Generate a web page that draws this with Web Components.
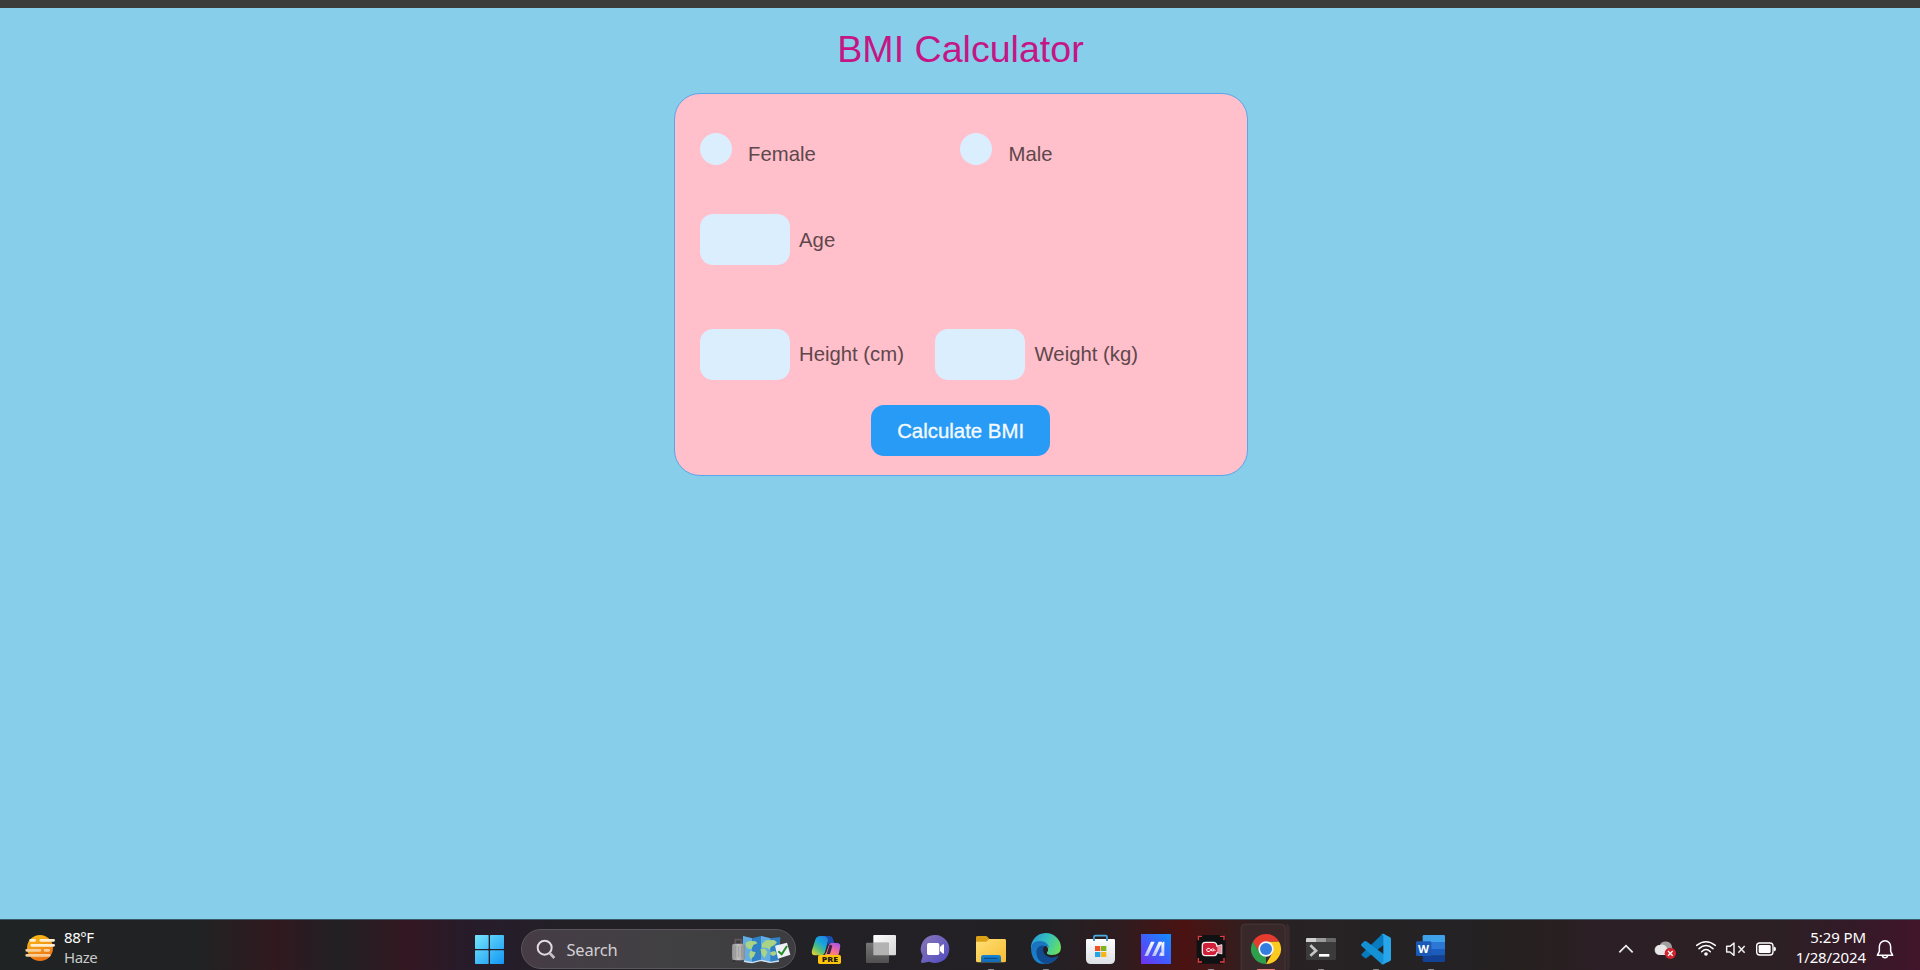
<!DOCTYPE html>
<html lang="en">
<head>
<meta charset="utf-8">
<title>BMI Calculator</title>
<style>
html,body{margin:0;height:100%;overflow:hidden;background:#87ceeb;font-family:"Liberation Sans",Arial,sans-serif}
</style>
</head>
<body>
<desktop-screen></desktop-screen>
<script>
const define = (name, html, setup) => customElements.define(name, class extends HTMLElement {
  connectedCallback() {
    if (this.shadowRoot) return;
    this.attachShadow({ mode: 'open' }).innerHTML = html;
    if (setup) setup(this, this.shadowRoot);
  }
});

/* Each icon: [viewBox x, width, drawing]; three drawing units per pixel, y runs from 27 to 180. */
const run = (x, c = '#8f8b8d', w = 20) => `<rect x="${x - w / 2}" y="177" width="${w}" height="9" rx="4" fill="${c}"/>`;
const icons = {
  haze: [60, 120, `<defs><linearGradient id="g" x1="0" y1="0" x2="0.4" y2="1"><stop stop-color="#fdc215"/><stop offset="1" stop-color="#ec7417"/></linearGradient></defs>
    <circle cx="120" cy="114" r="39" fill="url(#g)"/>
    <g stroke-linecap="round" stroke-width="8" fill="none"><path d="M92 91h12M122 91h39M95 106h66" stroke="#ffefd0"/><path d="M80 121h40M135 121h11M80 136h68" stroke="#f8cf9b"/></g>`],
  start: [3, 180, `<defs><linearGradient id="g" gradientUnits="userSpaceOnUse" x1="45" y1="75" x2="132" y2="162"><stop stop-color="#76e5fb"/><stop offset="1" stop-color="#1296f4"/></linearGradient></defs>
    <g fill="url(#g)"><rect x="45" y="75" width="41" height="42" rx="2"/><rect x="90" y="75" width="42" height="42" rx="2"/><rect x="45" y="121" width="41" height="41" rx="2"/><rect x="90" y="121" width="42" height="41" rx="2"/></g>`],
  glass: [220, 75, `<g fill="none" stroke="#dedce0" stroke-width="6"><circle cx="252" cy="113" r="21"/><path d="M267 129l14 15" stroke="#c5bfc6" stroke-width="8"/></g>`],
  travel: [258, 204, `<defs><linearGradient id="g"><stop stop-color="#8d8e90"/><stop offset=".5" stop-color="#c2c1bf"/><stop offset="1" stop-color="#8b8b8c"/></linearGradient></defs>
    <path d="M306 78l27 7 27-7 28 7 30-4-4 73-26 4-28-6-27 7-28-4z" fill="#2f80c4"/><path d="M306 78l27 7v74l-28-4zM360 78l28 7v73l-28-6z" fill="#62aee2"/>
    <path d="M305 153l28 5 27-7 28 6 26-4" fill="none" stroke="#d3e1ec" stroke-width="4"/>
    <path d="M314 98l10-5 20 1 5 6-12 5-5 11-9 2-9-9zM328 122l16 5-5 12-10 9-5-14zM363 101l12-10 24-1 9 7-8 9-10 4-5 9-8-6-14 0zM358 118l15-2 6 11-8 17-8-10zM388 126l14-3 5 9-9 6-10-4z" fill="#a9d483"/>
    <path d="M283 101V89h18v12" fill="none" stroke="#63575b" stroke-width="5"/><rect x="273" y="101" width="39" height="50" rx="7" fill="url(#g)"/><path d="M284 108v34M293 108v34M302 108v34" stroke="#939495" stroke-width="2.5"/><path d="M280 151v4M306 151v4" stroke="#2d2d2f" stroke-width="6"/>
    <path d="M402 107l36-9 10 36-37 12z" fill="#eef2f7"/><path d="M412 124l10 9 16-25" fill="none" stroke="#228b25" stroke-width="6"/>`],
  copilot: [-3, 165, `<defs><linearGradient id="a" x1=".8" y1="0" x2=".1" y2="1"><stop stop-color="#2381dd"/><stop offset=".35" stop-color="#16a5df"/><stop offset=".65" stop-color="#54bd7b"/><stop offset="1" stop-color="#eed52b"/></linearGradient><linearGradient id="b" x1=".8" y1="0" x2=".2" y2="1"><stop stop-color="#a957e6"/><stop offset=".5" stop-color="#f26b9e"/><stop offset="1" stop-color="#ff9b50"/></linearGradient></defs>
    <path d="M60 78h28l-12 44q-3 14-12 14H45q-13 0-9-15l10-32q4-11 14-11z" fill="url(#a)"/><path d="M74 78h14q9 0 12 12l4 10h-13q-7 0-9 8l2-17q-2-10-10-13z" fill="#1b50b0"/>
    <path d="M95 99h15q14 0 10 15l-5 23H68q8-1 11-10l6-18q3-10 10-10z" fill="url(#b)"/><path d="M92 104h-3l-9 28h10l7-25z" fill="#3c2144"/><rect x="54" y="135" width="69" height="27" rx="5" fill="#fdc40c"/>
    <text x="65" y="157" font-family="Noto Sans,sans-serif" font-size="21" font-weight="900" fill="#231d14" textLength="49" lengthAdjust="spacingAndGlyphs">PRE</text>`],
  taskview: [162, 165, `<defs><linearGradient id="a" x1="0" y1="0" x2="1" y2="1"><stop stop-color="#fff"/><stop offset="1" stop-color="#d5d5d5"/></linearGradient><linearGradient id="b" x2="0" y2="1"><stop stop-color="#777"/><stop offset="1" stop-color="#505050"/></linearGradient></defs>
    <rect x="220" y="75" width="68" height="61" rx="3" fill="url(#a)"/><rect x="198" y="98" width="69" height="61" rx="3" fill="url(#b)"/><path d="M220 98h44q3 0 3 3v35h-47z" fill="#b3b3b3"/>`],
  chat: [327, 165, `<defs><linearGradient id="a" x1="0" y1="0" x2="1" y2="1"><stop stop-color="#8b76b6"/><stop offset=".5" stop-color="#6c62bd"/><stop offset="1" stop-color="#504ac0"/></linearGradient></defs>
    <path d="M406 75a42 42 0 1 1-18 80l-21 4q-5 0-4-5l5-16a42 42 0 0 1 38-63z" fill="url(#a)"/><rect x="381" y="99" width="37" height="36" rx="5" fill="#fff"/><path d="M420 111l9-8q3-1 3 3v22q0 4-3 3l-9-8z" fill="#fff"/>`],
  explorer: [12, 165, `<defs><linearGradient id="a" x1="0" y1="0" x2="1" y2="1"><stop stop-color="#ffdf77"/><stop offset="1" stop-color="#f7bd30"/></linearGradient><linearGradient id="b" x2="0" y2="1"><stop stop-color="#1685d5"/><stop offset="1" stop-color="#1268b4"/></linearGradient></defs>
    <path d="M48 82q0-4 5-4h24q4 0 6 3l5 6h45q5 0 5 5v13H48z" fill="#daa017"/><path d="M48 95h29q4 0 7-4l3-4h46q5 0 5 5v60q0 5-5 5H53q-5 0-5-5z" fill="url(#a)"/><path d="M63 157v-15q0-7 7-7h46q7 0 7 7v15z" fill="url(#b)"/><path d="M73 145h38" stroke="#0a518c" stroke-width="4" stroke-linecap="round"/>${run(93)}`],
  edge: [177, 165, `<defs><linearGradient id="a" x1="0" y1=".2" x2="1" y2=".6"><stop stop-color="#2799d9"/><stop offset=".5" stop-color="#35c1bd"/><stop offset="1" stop-color="#67df61"/></linearGradient><linearGradient id="b" x2=".5" y2="1"><stop stop-color="#1b6fbb"/><stop offset="1" stop-color="#188ad5"/></linearGradient></defs>
    <path d="M213 116a45 45 0 0 1 90-4q0 23-27 23-18 0-15-8 5-5 3-11-4-14-22-14-19 0-29 14z" fill="url(#a)"/>
    <path d="M213 116q0-22 27-23 24 1 28 22-5-8-13-7-10 4-8 14 3 22 28 22 10 0 20-6-15 24-40 24-40 0-42-46z" fill="url(#b)"/><path d="M242 107q-14 5-13 22 2 25 26 33 27 0 40-24-10 6-20 5-24-3-26-23 0-7 6-12-5-3-13-1z" fill="#124c90"/>${run(258)}`],
  store: [342, 165, `<defs><linearGradient id="a" x2="0" y2="1"><stop stop-color="#fdfdfe"/><stop offset="1" stop-color="#dce0e5"/></linearGradient></defs>
    <path d="M402 92V81q0-4 4-4h31q4 0 4 4v11" fill="none" stroke="#49afe3" stroke-width="5"/><path d="M378 91q0-4 4-4h79q4 0 4 4v56q0 15-15 15h-57q-15 0-15-15z" fill="url(#a)"/><path d="M402 86v7M441 86v7" stroke="#2678b8" stroke-width="5"/>
    <rect x="405" y="108" width="16" height="15" fill="#f05024"/><rect x="423" y="108" width="16" height="15" fill="#7ab51d"/><rect x="405" y="126" width="16" height="15" fill="#21a5e7"/><rect x="423" y="126" width="16" height="15" fill="#f8b514"/>`],
  myasus: [27, 165, `<defs><linearGradient id="a" x1="1" y1="0" x2="0" y2="1"><stop stop-color="#108eff"/><stop offset=".5" stop-color="#3e5efd"/><stop offset="1" stop-color="#7031ee"/></linearGradient><linearGradient id="b" x2="0" y2="1"><stop stop-color="#fff"/><stop offset="1" stop-color="#b5bdf6"/></linearGradient></defs>
    <rect x="63" y="72" width="90" height="90" fill="url(#a)"/><path d="M93 95h11l-20 43H73zM116 95h11l-20 43H96zM124 101l6-6h3v43h-16l3-10 4-1z" fill="url(#b)"/><circle cx="126" cy="133" r="5" fill="#dfe5ff"/>`],
  recorder: [192, 165, `<rect x="230" y="75" width="87" height="86" rx="13" fill="#101113"/><g fill="none" stroke="#e33c43" stroke-width="4"><path d="M235 91V79h11M300 79h12v12M235 144v12h11M300 156h12v-12"/></g>
    <path d="M256 97h24q10 0 11 12l14-4v26l-14-4q-1 10-11 10h-24q-9 0-9-10v-20q0-10 9-10z" fill="#cf1f39" stroke="#faeef0" stroke-width="4" stroke-linejoin="round"/><path d="M292 109l13-4v26l-13-4z" fill="#e58fa0"/><path d="M282 122q-6 3-10-3-4-7-10-3-5 4 0 8 5 3 10-3 5-8 10-3l4 5" fill="none" stroke="#fff" stroke-width="3"/>${run(273)}`],
  chrome: [357, 165, `<path d="M498 42q11 1 11 12v120q0 6-5 6h-4z" fill="#4a3235" opacity=".6"/><rect x="363.5" y="42.500" width="132" height="150" rx="12" fill="#382829" stroke="#4a393b" stroke-width="3"/>
    <path d="M399 94.500l19.500 33.800 19.500 11.200v22.500A45 45 0 0 1 399 94.500z" fill="#2e9f4c"/><path d="M438 94.500h39A45 45 0 0 1 438 162l19.500-33.700z" fill="#fdcb20"/><path d="M399 94.500L418.500 128.300 438 117V94.500z" fill="#2e9f4c"/><path d="M399 94.500A45 45 0 0 1 477 94.500H438l-19 12-6 12z" fill="#e63c30"/><circle cx="438" cy="117" r="23" fill="#f4f6fa"/><circle cx="438" cy="117" r="18" fill="#347de0"/>${run(438, '#e77d72', 56)}`],
  terminal: [12, 165, `<rect x="48" y="84" width="90" height="66" rx="4" fill="#3b3b3b"/><path d="M48 96v-8q0-4 4-4h28v12z" fill="#d1d1d1"/><path d="M80 84h29v12H80z" fill="#9a9a9a"/><path d="M109 84h25q4 0 4 4v8h-29z" fill="#686868"/><path d="M61 106l17 16-17 15" fill="none" stroke="#c6c6c6" stroke-width="8"/><path d="M87 136h31" stroke="#fff" stroke-width="8"/>${run(93)}`],
  vscode: [177, 165, `<path d="M215 132l61-59q4-3 9 0l-1 30-54 41q-3 2-6-1l-8-6q-3-2-1-5z" fill="#087abe"/><path d="M215 101l8-7q3-2 6 0l55 41v26q-5 4-10 0l-60-54q-2-3 1-6z" fill="#1490d5"/><path d="M281 72l18 9q4 2 4 6v61q0 4-4 6l-18 8q-4 2-8-1 7 1 7-5V78q0-6-7-5 4-3 8-1z" fill="#27a6ec"/>${run(258)}`],
  word: [342, 165, `<path d="M398 79q0-4 4-4h59q4 0 4 4v18h-67z" fill="#40a1eb"/><path d="M398 96h67v21h-67z" fill="#2c77d6"/><path d="M398 117h67v20h-67z" fill="#1c5cbd"/><path d="M398 137h67v15q0 4-4 4h-59q-4 0-4-4z" fill="#124295"/><rect x="378" y="94" width="46" height="44" rx="4" fill="#1b59b6"/><text x="384" y="128" font-family="Noto Sans,sans-serif" font-size="33" font-weight="700" fill="#fff" textLength="33" lengthAdjust="spacingAndGlyphs">W</text>${run(423)}`],
  chevron: [15, 120, `<path d="M58 127l20-20 20 20" fill="none" stroke="#eee" stroke-width="5"/>`],
  cloud: [135, 135, `<path d="M178 135a15 15 0 0 1 1-30 20 20 0 0 1 37 5q7 25-9 25z" fill="#a0a0a0"/><path d="M180 135a15 15 0 0 1 0-30q10-4 19 5l12 25z" fill="#e7e7e7"/><circle cx="211" cy="130" r="17" fill="#cf252e"/><path d="M204 123l14 14M218 123l-14 14" stroke="#fff" stroke-width="4"/>`],
  wifi: [270, 93, `<g fill="none" stroke="#fff" stroke-width="4.500" stroke-linecap="round"><path d="M290 106q28-22 56 0M297 116q21-19 42 0M305 125q13-13 26 0"/></g><circle cx="318" cy="132" r="5.500" fill="#fff"/>`],
  volume: [363, 87, `<path d="M380 109h10l12-10v37l-12-10h-10z" fill="none" stroke="#eee" stroke-width="4.500" stroke-linejoin="round"/><path d="M415 108l19 20M434 108l-19 20" stroke="#eee" stroke-width="4.500"/>`],
  battery: [450, 90, `<rect x="470" y="99" width="49" height="36" rx="9" fill="none" stroke="#fff" stroke-width="4"/><rect x="476" y="105" width="36" height="24" rx="4" fill="#fff"/><path d="M522 111q5 0 5 6t-5 6z" fill="#fff" stroke="#fff" stroke-width="2"/>`],
  bell: [810, 90, `<path d="M832 136l6-12v-14a17 18 0 0 1 34 0v14l6 12zM847 137q1 6 8 6t8-6" fill="none" stroke="#fff" stroke-width="4.500" stroke-linejoin="round"/>`]
};

define('glyph-icon', `<style>:host{display:block;flex:none;height:51px}svg{display:block;height:51px}</style>`, (el, root) => {
  const [x, w, art] = icons[el.getAttribute('name')];
  el.style.width = w / 3 + 'px';
  root.innerHTML += `<svg width="${w / 3}" viewBox="${x} 27 ${w} 153" aria-hidden="true">${art}</svg>`;
});

define('radio-option', `<style>
  :host{display:flex;align-items:flex-start;width:260.500px;flex:none;color:#5e474b;font-size:20.300px;line-height:24px}
  i{width:32px;height:32px;border-radius:50%;background:#dbeefe;margin-right:16.500px}
  span{margin-top:9px}
</style><i></i><span><slot></slot></span>`);

define('number-field', `<style>
  :host{display:flex;align-items:center;flex:none;color:#5e474b;font-size:20.300px;line-height:24px;height:51px}
  input{box-sizing:border-box;width:90px;height:51px;border:0;border-radius:13px;background:#dbeefe;margin:0 9.500px 0 0;padding:0}
  span{white-space:nowrap}
</style><input aria-label="value"><span><slot></slot></span>`);

define('action-button', `<style>
  :host{display:block}
  button{display:block;width:179px;height:51px;margin:0 auto;padding:1.500px 0 0;border:0;border-radius:13px;background:#289bf6;color:#f3faff;font:20.400px "Liberation Sans",Arial,sans-serif;-webkit-text-stroke:.35px #f3faff}
</style><button><slot></slot></button>`);

define('bmi-card', `<style>
  :host{display:flex;flex-direction:column;box-sizing:border-box;width:574px;height:383px;margin:24px 0 0 1.200px;padding:39px 25px 0;border:1px solid #5aa6ea;border-radius:26px;background:#ffbfcb}
  .row{display:flex}
  .sex{height:81px}.age{height:114.500px}.size{height:76.500px}
  .size number-field:first-child{width:235.500px}
</style>
<div class="row sex"><radio-option>Female</radio-option><radio-option>Male</radio-option></div>
<div class="row age"><number-field>Age</number-field></div>
<div class="row size"><number-field>Height (cm)</number-field><number-field>Weight (kg)</number-field></div>
<action-button>Calculate BMI</action-button>`);

define('search-pill', `<style>
  :host{display:flex;box-sizing:border-box;width:275px;height:40px;margin-top:10px;flex:none;border:1px solid #5b555d;border-radius:20px;background:linear-gradient(90deg,#463c46,#414043 50%,#3d3d40);align-items:flex-start;overflow:hidden;color:#d2cfd3;font:16.500px/24px "Noto Sans","Open Sans",sans-serif;letter-spacing:-.2px}
  glyph-icon{margin-top:-11px}
  glyph-icon:first-of-type{margin-left:11.500px}
  span{flex:1;margin:8px 0 0 8px}
</style><glyph-icon name="glass"></glyph-icon><span><slot></slot></span><glyph-icon name="travel"></glyph-icon>`);

define('stacked-text', `<style>
  :host{display:flex;flex-direction:column;flex:none;color:#fff;font:15px/20px "Noto Sans","Open Sans",sans-serif;letter-spacing:-.45px;padding-top:8px;white-space:nowrap}
  :host([align=end]){align-items:flex-end;letter-spacing:-.1px}
  slot::slotted(.dim){color:#c9c9c9}
</style><slot></slot>`);

define('task-bar', `<style>
  :host{display:flex;align-items:flex-start;box-sizing:border-box;height:51px;overflow:hidden;box-shadow:inset 0 1px #3a5966;
    background:linear-gradient(90deg,#202324 0,#212223 200px,#30191f 275px,#222024 340px,#331821 405px,#281b2a 460px,#251e2a 510px,#222025 570px,#222126 800px,#232024 1050px,#2e1c1f 1120px,#4b1212 1185px,#341d1d 1240px,#282123 1290px,#252224 1380px,#242224 1460px,#26201f 1520px,#2c1f25 1600px,#2d2024 1780px,#331a27 1850px,#41152b 1920px)}
  .weather,.apps,.tray{display:flex;align-items:flex-start;flex:none}
  .weather{width:461px;padding-left:20px;box-sizing:border-box}
  .weather stacked-text{margin-left:4px}
  .apps{margin-left:3px}
  .tray{margin-left:auto;padding-right:20px}
  .clock{width:86px;margin-right:4px}
</style>
<div class="weather"><glyph-icon name="haze"></glyph-icon><stacked-text><span>88°F</span><span class="dim">Haze</span></stacked-text></div>
<glyph-icon name="start"></glyph-icon><search-pill>Search</search-pill>
<div class="apps"></div>
<div class="tray"><glyph-icon name="chevron"></glyph-icon><glyph-icon name="cloud"></glyph-icon><glyph-icon name="wifi"></glyph-icon><glyph-icon name="volume"></glyph-icon><glyph-icon name="battery"></glyph-icon><stacked-text class="clock" align="end"><span>5:29 PM</span><span>1/28/2024</span></stacked-text><glyph-icon name="bell"></glyph-icon></div>`, (el, root) => {
  root.querySelector('.apps').innerHTML = ['copilot', 'taskview', 'chat', 'explorer', 'edge', 'store', 'myasus', 'recorder', 'chrome', 'terminal', 'vscode', 'word']
    .map(n => `<glyph-icon name="${n}"></glyph-icon>`).join('');
});

define('desktop-screen', `<style>
  :host{display:flex;flex-direction:column;height:970px;box-sizing:border-box;border-top:8px solid #3c3c3b;background:#87ceeb}
  main{flex:1;display:flex;flex-direction:column;align-items:center}
  h1{margin:21px 0 0 1px;font-size:37.600px;line-height:40px;font-weight:400;color:#c41684}
</style>
<main><h1>BMI Calculator</h1><bmi-card></bmi-card></main><task-bar></task-bar>`);
</script>
</body>
</html>
